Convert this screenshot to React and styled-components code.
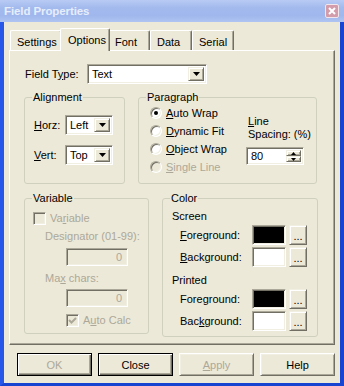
import React from 'react';
import styled, { createGlobalStyle, css } from 'styled-components';

const face = '#ECE9D8';
const light = '#F1EFE2';
const shadow = '#ACA899';
const dark = '#716F64';
const grayText = '#ACA899';

const GlobalStyle = createGlobalStyle`
  body {
    margin: 0;
    background: ${face};
    font-family: "Liberation Sans", Arial, sans-serif;
    font-size: 11px;
    line-height: 13px;
    color: #000;
  }
`;

const sunken = css`
  box-sizing: border-box;
  border: 1px solid;
  border-color: ${shadow} #fff #fff ${shadow};
  box-shadow: inset 1px 1px ${dark}, inset -1px -1px ${light};
`;

const raised = css`
  box-sizing: border-box;
  border: 1px solid;
  border-color: ${light} ${dark} ${dark} ${light};
  box-shadow: inset 1px 1px #fff, inset -1px -1px ${shadow};
  background: ${face};
`;

const tabs = [
  { label: 'Settings', w: 52 },
  { label: 'Options', w: 50, active: true },
  { label: 'Font', w: 42 },
  { label: 'Data', w: 42 },
  { label: 'Serial', w: 42 },
];

function Combo({ value, width }) {
  return (
    <ComboBox $w={width}>
      <ComboText>{value}</ComboText>
      <ArrowBtn>
        <svg width="7" height="4" viewBox="0 0 7 4"><path d="M0 0H7L3.5 4Z" fill="#000" /></svg>
      </ArrowBtn>
    </ComboBox>
  );
}

function Check({ checked }) {
  return (
    <CheckBox>
      {checked && (
        <svg width="9" height="9" viewBox="0 0 9 9">
          <path d="M1 4L3.5 6.5L8 2" stroke={grayText} strokeWidth="2" fill="none" />
        </svg>
      )}
    </CheckBox>
  );
}

function ColorPick({ label, color }) {
  return (
    <ColorRow>
      <ColorLabel>{label}</ColorLabel>
      <Swatch $c={color} />
      <DotsBtn>...</DotsBtn>
    </ColorRow>
  );
}

export default function App() {
  return (
    <>
      <GlobalStyle />
      <Window>
        <TitleBar>
          <Title>Field Properties</Title>
          <CloseBox>
            <svg width="8" height="8" viewBox="0 0 8 8">
              <path d="M1 1L7 7M7 1L1 7" stroke="#fff" strokeWidth="2" />
            </svg>
          </CloseBox>
        </TitleBar>
        <Frame>
          <TabStrip>
            {tabs.map(t => (
              <Tab key={t.label} $w={t.w} $active={t.active}>{t.label}</Tab>
            ))}
          </TabStrip>
          <Panel>
            <FieldTypeRow>
              <FieldLabel>Field T<U>y</U>pe:</FieldLabel>
              <Combo value="Text" width={120} />
            </FieldTypeRow>

            <GroupRow>
              <Group $w={101} $h={93}>
                <Legend>Alignment</Legend>
                <AlignBody>
                  <AlignRow>
                    <AlignLabel><U>H</U>orz:</AlignLabel>
                    <Combo value="Left" width={48} />
                  </AlignRow>
                  <AlignRow>
                    <AlignLabel><U>V</U>ert:</AlignLabel>
                    <Combo value="Top" width={48} />
                  </AlignRow>
                </AlignBody>
              </Group>

              <Group $w={179} $h={93}>
                <Legend>Paragraph</Legend>
                <ParaBody>
                  <RadioCol>
                    <RadioRow><Radio $checked /><span><U>A</U>uto Wrap</span></RadioRow>
                    <RadioRow><Radio /><span><U>D</U>ynamic Fit</span></RadioRow>
                    <RadioRow><Radio /><span><U>O</U>bject Wrap</span></RadioRow>
                    <RadioRow $disabled><Radio $disabled /><span><U>S</U>ingle Line</span></RadioRow>
                  </RadioCol>
                  <SpacingCol>
                    <div><U>L</U>ine</div>
                    <div>Spacing: (%)</div>
                    <SpinBox>
                      <SpinText>80</SpinText>
                      <SpinBtns>
                        <SpinBtn>
                          <svg width="5" height="3" viewBox="0 0 5 3"><path d="M0 3H5L2.5 0Z" fill="#000" /></svg>
                        </SpinBtn>
                        <SpinBtn>
                          <svg width="5" height="3" viewBox="0 0 5 3"><path d="M0 0H5L2.5 3Z" fill="#000" /></svg>
                        </SpinBtn>
                      </SpinBtns>
                    </SpinBox>
                  </SpacingCol>
                </ParaBody>
              </Group>
            </GroupRow>

            <GroupRow $top={8}>
              <Group $w={125} $h={142}>
                <Legend>Variable</Legend>
                <VarBody>
                  <CheckRow><Check /><span>Va<U>r</U>iable</span></CheckRow>
                  <DimLabel $top={5}>Desi<U>g</U>nator (01-99):</DimLabel>
                  <NumBox $top={5}>0</NumBox>
                  <DimLabel $top={6}>Ma<U>x</U> chars:</DimLabel>
                  <NumBox $top={4}>0</NumBox>
                  <CheckRow $indent={33} $top={7}><Check checked /><span>A<U>u</U>to Calc</span></CheckRow>
                </VarBody>
              </Group>

              <Group $w={156} $h={145}>
                <Legend>Color</Legend>
                <ColorBody>
                  <div>Screen</div>
                  <ColorPick label={<><U>F</U>oreground:</>} color="#000" />
                  <ColorPick label={<><U>B</U>ackground:</>} color="#fff" />
                  <SubHead>Printed</SubHead>
                  <ColorPick label={<>Fore<U>g</U>round:</>} color="#000" />
                  <ColorPick label={<>Bac<U>k</U>ground:</>} color="#fff" />
                </ColorBody>
              </Group>
            </GroupRow>
          </Panel>

          <ButtonRow>
            <DlgButton $default disabled>OK</DlgButton>
            <DlgButton $default>Close</DlgButton>
            <DlgButton disabled><U>A</U>pply</DlgButton>
            <DlgButton>Help</DlgButton>
          </ButtonRow>
        </Frame>
      </Window>
    </>
  );
}

const Window = styled.div`
  width: 344px;
  height: 386px;
  display: flex;
  flex-direction: column;
  background: ${face};
`;

const TitleBar = styled.div`
  height: 22px;
  flex-shrink: 0;
  display: flex;
  align-items: center;
  justify-content: space-between;
  padding: 0 5px 0 4px;
  background: linear-gradient(to bottom, #B9CBF4 0%, #A3BAEE 35%, #9FB7ED 70%, #AFC4F1 100%);
`;

const Title = styled.div`
  font-weight: bold;
  font-size: 11.5px;
  letter-spacing: -0.1px;
  color: #E6EDFB;
  padding-top: 1px;
`;

const CloseBox = styled.div`
  width: 14px;
  height: 14px;
  box-sizing: border-box;
  border: 1px solid #F1E6EC;
  border-radius: 2px;
  background: #D39CAA;
  display: flex;
  align-items: center;
  justify-content: center;
`;

const Frame = styled.div`
  flex: 1;
  display: flex;
  flex-direction: column;
  border-style: solid;
  border-width: 0 4px 3px 4px;
  border-color: #1F50E2 #1744D0 #1744D0 #2657E8;
  padding: 6px 5px 0;
`;

const TabStrip = styled.div`
  height: 22px;
  display: flex;
  align-items: flex-end;
  padding-left: 1px;
`;

const Tab = styled.div`
  position: relative;
  box-sizing: border-box;
  width: ${p => p.$w}px;
  height: ${p => (p.$active ? 23 : 20)}px;
  margin: ${p => (p.$active ? '0 -2px -1px' : '0')};
  z-index: ${p => (p.$active ? 1 : 0)};
  padding: 5px 0 0 ${p => (p.$active ? 7 : 6)}px;
  background: ${face};
  border-top: 1px solid #fff;
  border-left: 1px solid #fff;
  border-right: 1px solid ${dark};
  box-shadow: inset -1px 0 ${shadow};
  border-radius: 2px 2px 0 0;
`;

const Panel = styled.div`
  height: 295px;
  box-sizing: border-box;
  border: 1px solid;
  border-color: #fff ${dark} ${dark} #fff;
  box-shadow: inset -1px -1px ${shadow};
  padding: 13px 0 0 14px;
`;

const U = styled.span`
  text-decoration: underline;
`;

const FieldTypeRow = styled.div`
  display: flex;
  align-items: center;
  height: 20px;
`;

const FieldLabel = styled.div`
  width: 62px;
  padding-left: 1px;
`;

const ComboBox = styled.div`
  ${sunken};
  width: ${p => p.$w}px;
  height: 20px;
  padding: 2px;
  background: #fff;
  display: flex;
`;

const ComboText = styled.div`
  flex: 1;
  display: flex;
  align-items: center;
  padding-left: 2px;
`;

const ArrowBtn = styled.div`
  ${raised};
  width: 16px;
  display: flex;
  align-items: center;
  justify-content: center;
`;

const GroupRow = styled.div`
  display: flex;
  gap: 13px;
  margin-top: ${p => p.$top ?? 7}px;
`;

const Group = styled.fieldset`
  margin: 0;
  padding: 0;
  min-width: 0;
  box-sizing: border-box;
  width: ${p => p.$w}px;
  height: ${p => p.$h}px;
  border: 1px solid #D0D0BF;
  border-radius: 3px;
`;

const Legend = styled.legend`
  padding: 0 1px;
  margin-left: 7px;
  line-height: 13px;
`;

const AlignBody = styled.div`
  padding: 11px 0 0 9px;
  display: flex;
  flex-direction: column;
  gap: 10px;
`;

const AlignRow = styled.div`
  display: flex;
  align-items: center;
`;

const AlignLabel = styled.div`
  width: 31px;
`;

const ParaBody = styled.div`
  padding: 0 0 0 11px;
  display: flex;
`;

const RadioCol = styled.div`
  width: 96px;
  display: flex;
  flex-direction: column;
`;

const RadioRow = styled.div`
  height: 18px;
  display: flex;
  align-items: center;
  gap: 4px;
  color: ${p => (p.$disabled ? grayText : '#000')};
`;

const Radio = styled.span`
  box-sizing: border-box;
  width: 12px;
  height: 12px;
  border-radius: 50%;
  border: 1px solid;
  border-color: ${shadow} #fff #fff ${shadow};
  box-shadow: inset 1px 1px ${dark}, inset -1px -1px ${light};
  background: ${p => (p.$disabled ? face : '#fff')};
  display: flex;
  align-items: center;
  justify-content: center;
  &::after {
    content: '';
    display: ${p => (p.$checked ? 'block' : 'none')};
    width: 4px;
    height: 4px;
    border-radius: 50%;
    background: #000;
  }
`;

const SpacingCol = styled.div`
  padding-top: 11px;
  & > div:not(:last-child) {
    padding-left: 2px;
  }
`;

const SpinBox = styled.div`
  ${sunken};
  width: 58px;
  height: 18px;
  margin-top: 6px;
  padding: 2px;
  background: #fff;
  display: flex;
`;

const SpinText = styled.div`
  flex: 1;
  display: flex;
  align-items: center;
  padding-left: 2px;
`;

const SpinBtns = styled.div`
  width: 15px;
  display: flex;
  flex-direction: column;
`;

const SpinBtn = styled.div`
  ${raised};
  flex: 1;
  display: flex;
  align-items: center;
  justify-content: center;
`;

const VarBody = styled.div`
  padding: 7px 0 0 8px;
  display: flex;
  flex-direction: column;
  align-items: flex-start;
  color: ${grayText};
`;

const CheckRow = styled.div`
  display: flex;
  align-items: center;
  gap: 4px;
  margin-left: ${p => p.$indent ?? 0}px;
  margin-top: ${p => p.$top ?? 0}px;
`;

const CheckBox = styled.span`
  ${sunken};
  width: 13px;
  height: 13px;
  background: ${face};
  display: flex;
  align-items: center;
  justify-content: center;
`;

const DimLabel = styled.div`
  margin: ${p => p.$top}px 0 0 12px;
`;

const NumBox = styled.div`
  ${sunken};
  width: 62px;
  height: 18px;
  margin: ${p => p.$top}px 0 0 33px;
  padding-right: 5px;
  background: ${face};
  display: flex;
  align-items: center;
  justify-content: flex-end;
`;

const ColorBody = styled.div`
  padding: 5px 0 0 9px;
  display: flex;
  flex-direction: column;
  gap: 2px;
`;

const SubHead = styled.div`
  margin-top: 5px;
`;

const ColorRow = styled.div`
  display: flex;
  align-items: center;
`;

const ColorLabel = styled.div`
  box-sizing: border-box;
  width: 80px;
  padding-left: 8px;
`;

const Swatch = styled.div`
  ${sunken};
  width: 34px;
  height: 20px;
  background: ${p => p.$c};
`;

const DotsBtn = styled.div`
  ${raised};
  width: 18px;
  height: 20px;
  margin-left: 3px;
  display: flex;
  align-items: center;
  justify-content: center;
  padding-top: 3px;
`;

const ButtonRow = styled.div`
  display: flex;
  justify-content: flex-end;
  gap: 6px;
  margin-top: 8px;
`;

const DlgButton = styled.button`
  width: 75px;
  height: 23px;
  box-sizing: border-box;
  padding: 0;
  font-family: inherit;
  font-size: 11px;
  background: ${face};
  color: #000;
  border: 1px solid;
  border-color: ${p => (p.$default ? '#000' : `#fff ${dark} ${dark} #fff`)};
  box-shadow: ${p =>
    p.$default
      ? `inset 1px 1px #fff, inset -1px -1px ${dark}, inset -2px -2px ${shadow}`
      : `inset 1px 1px ${light}, inset -1px -1px ${shadow}`};
  &:disabled {
    color: ${grayText};
  }
`;
